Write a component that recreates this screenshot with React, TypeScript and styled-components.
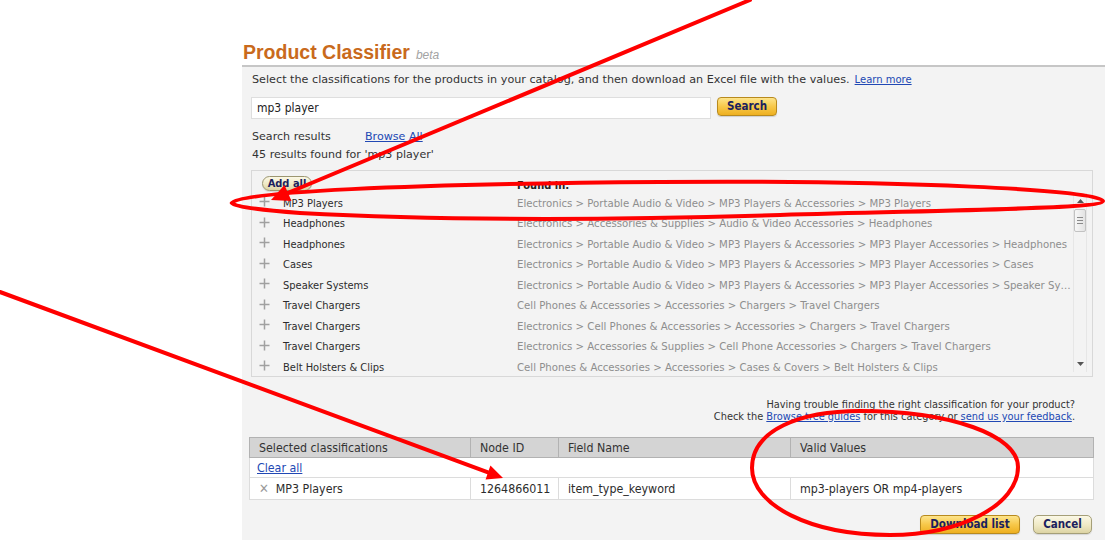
import React from "react";
import styled, { createGlobalStyle } from "styled-components";

const GlobalStyle = createGlobalStyle`
  html, body { margin: 0; padding: 0; background: #ffffff; }
  body {
    font-family: "DejaVu Sans Condensed", "DejaVu Sans", sans-serif;
    font-size: 11px;
    color: #333333;
  }
`;

const Page = styled.div`
  position: relative;
  width: 1105px;
  height: 540px;
  overflow: hidden;
  padding-left: 242px;
  box-sizing: border-box;
  display: flex;
  flex-direction: column;
`;

const Title = styled.h1`
  margin: 40px 0 0 1px;
  height: 24px;
  line-height: 24px;
  font-family: "Liberation Sans", Arial, sans-serif;
  font-size: 19.5px;
  font-weight: bold;
  color: #c96a1c;
  display: flex;
  align-items: baseline;
  gap: 6px;
`;

const Beta = styled.span`
  font-size: 12px;
  font-style: italic;
  font-weight: normal;
  color: #a3a3a3;
`;

const Panel = styled.div`
  margin-top: 1px;
  flex: 1;
  background: #f3f3f3;
  border-top: 2px solid #c6c6c6;
  padding: 6px 12px 0 9px;
  display: flex;
  flex-direction: column;
`;

const Intro = styled.div`
  font-family: "DejaVu Sans", sans-serif;
  font-size: 11.2px;
  line-height: 14px;
  padding-left: 1px;
  color: #333;
`;

const SmallLink = styled.a`
  font-size: 10px;
  color: #2148b4;
  text-decoration: underline;
  margin-left: 5px;
`;

const Link = styled.a`
  color: #2148b4;
  text-decoration: underline;
  cursor: pointer;
`;

const SearchRow = styled.div`
  margin-top: 10px;
  display: flex;
  align-items: flex-start;
  gap: 6px;
`;

const SearchInput = styled.div`
  width: 460px;
  height: 22px;
  box-sizing: border-box;
  background: #ffffff;
  border: 1px solid #dedede;
  padding-left: 5px;
  font-size: 12px;
  line-height: 20px;
  color: #222;
`;

const GoldButton = styled.button<{ $w: number }>`
  width: ${(p) => p.$w}px;
  height: 19px;
  box-sizing: border-box;
  padding: 0;
  border: 1px solid #b88a1e;
  border-radius: 4px;
  background: linear-gradient(#fde48a 0%, #f7c84a 50%, #eeb020 100%);
  font-family: "DejaVu Sans Condensed", "DejaVu Sans", sans-serif;
  font-size: 11.5px;
  font-weight: bold;
  color: #1b1f5e;
  line-height: 17px;
  box-shadow: 0 1px 1px rgba(0,0,0,0.15);
`;

const CreamButton = styled.button<{ $w: number; $h: number }>`
  width: ${(p) => p.$w}px;
  height: ${(p) => p.$h}px;
  box-sizing: border-box;
  padding: 0;
  border: 1px solid #a59f78;
  border-radius: 5px;
  background: linear-gradient(#fbf8e6 0%, #efe9c4 55%, #ddd4a4 100%);
  font-family: "DejaVu Sans Condensed", "DejaVu Sans", sans-serif;
  font-size: 11.5px;
  font-weight: bold;
  color: #1b1f5e;
  line-height: 100%;
  box-shadow: 0 1px 1px rgba(0,0,0,0.12);
`;

const Info = styled.div`
  margin-top: 9px;
  font-family: "DejaVu Sans", sans-serif;
  font-size: 11.1px;
  line-height: 18px;
  padding-left: 1px;
`;

const InfoLabel = styled.span`
  display: inline-block;
  width: 113px;
`;

const ResultsBox = styled.div`
  margin-top: 6px;
  height: 207px;
  box-sizing: border-box;
  border: 1px solid #d8d8d8;
  display: flex;
  overflow: hidden;
`;

const List = styled.div`
  flex: 1;
  min-width: 0;
`;

const ListGrid = styled.div`
  display: grid;
  grid-template-columns: 31px 234px minmax(0, 1fr);
  align-items: center;
`;

const HeaderRow = styled(ListGrid)`
  height: 22px;
  align-items: start;
`;

const AddAll = styled(CreamButton)`
  grid-column: 1 / span 2;
  margin: 5px 0 0 10px;
  border-radius: 8px;
  font-size: 11px;
  border-color: #9c9670;
`;

const FoundIn = styled.div`
  grid-column: 3;
  align-self: end;
  font-weight: bold;
  color: #222;
  line-height: 14px;
`;

const Row = styled(ListGrid)`
  height: 20.5px;
`;

const PlusIcon = styled.svg`
  margin: 0 0 3px 7px;
  display: block;
`;

const Name = styled.div`
  color: #2c2c2c;
  white-space: nowrap;
`;

const Path = styled.div`
  color: #8e8e8e;
  font-size: 11.3px;
  white-space: nowrap;
  overflow: hidden;
  text-overflow: ellipsis;
`;

const ScrollTrack = styled.div`
  width: 14px;
  margin: 22px 5px 4px 0;
  box-sizing: border-box;
  border-left: 1px solid #e6e6e6;
  border-right: 1px solid #e6e6e6;
  display: flex;
  flex-direction: column;
  align-items: center;
`;

const ScrollArrow = styled.div`
  height: 16px;
  width: 100%;
  display: flex;
  align-items: center;
  justify-content: center;
`;

const Thumb = styled.div`
  width: 12px;
  height: 23px;
  box-sizing: border-box;
  border: 1px solid #c2c2c2;
  border-radius: 2px;
  background: linear-gradient(90deg, #f7f7f7, #e3e3e3);
  display: flex;
  flex-direction: column;
  justify-content: center;
  align-items: center;
  gap: 2px;
`;

const Grip = styled.div`
  width: 6px;
  height: 1px;
  background: #8a8a8a;
`;

const Spacer = styled.div`
  flex: 1;
`;

const Help = styled.div`
  margin-top: 22px;
  padding-right: 18px;
  text-align: right;
  font-size: 10.9px;
  line-height: 12px;
  color: #333;
`;

const Table = styled.table`
  margin: 14px 0 0 -2px;
  width: 844px;
  border-collapse: collapse;
  table-layout: fixed;
  font-size: 12.3px;
  color: #2c2c2c;
`;

const Th = styled.th<{ $w: number }>`
  width: ${(p) => p.$w}px;
  height: 20px;
  padding: 0 0 0 9px;
  box-sizing: border-box;
  text-align: left;
  font-weight: normal;
  background: #d4d4d4;
  border: 1px solid #b2b2b2;
  color: #333;
`;

const ClearCell = styled.td`
  height: 19px;
  padding: 0 0 0 7px;
  background: #fff;
  border: 1px solid #dcdcdc;
  border-top: none;
`;

const Td = styled.td`
  height: 21px;
  padding: 0 0 0 9px;
  background: #fff;
  border: 1px solid #dcdcdc;
  white-space: nowrap;
`;

const XMark = styled.span`
  color: #9a9a9a;
  font-size: 13px;
  margin-right: 7px;
`;

const Actions = styled.div`
  margin-top: 15px;
  padding-right: 1px;
  display: flex;
  justify-content: flex-end;
  gap: 13px;
`;

const Overlay = styled.svg`
  position: absolute;
  left: 0;
  top: 0;
  pointer-events: none;
  z-index: 10;
`;

const results: [string, string][] = [
  ["MP3 Players", "Electronics > Portable Audio & Video > MP3 Players & Accessories > MP3 Players"],
  ["Headphones", "Electronics > Accessories & Supplies > Audio & Video Accessories > Headphones"],
  ["Headphones", "Electronics > Portable Audio & Video > MP3 Players & Accessories > MP3 Player Accessories > Headphones"],
  ["Cases", "Electronics > Portable Audio & Video > MP3 Players & Accessories > MP3 Player Accessories > Cases"],
  ["Speaker Systems", "Electronics > Portable Audio & Video > MP3 Players & Accessories > MP3 Player Accessories > Speaker Systems"],
  ["Travel Chargers", "Cell Phones & Accessories > Accessories > Chargers > Travel Chargers"],
  ["Travel Chargers", "Electronics > Cell Phones & Accessories > Accessories > Chargers > Travel Chargers"],
  ["Travel Chargers", "Electronics > Accessories & Supplies > Cell Phone Accessories > Chargers > Travel Chargers"],
  ["Belt Holsters & Clips", "Cell Phones & Accessories > Accessories > Cases & Covers > Belt Holsters & Clips"],
];

const Plus = () => (
  <PlusIcon width="11" height="11" viewBox="0 0 11 11">
    <path d="M5.5 0.5V10.5M0.5 5.5H10.5" stroke="#a0a0a0" strokeWidth="1.5" />
  </PlusIcon>
);

const Annotations = () => (
  <Overlay width="1105" height="540" viewBox="0 0 1105 540">
    <g stroke="#ff0000" strokeWidth="4" fill="none" strokeLinecap="round">
      <path d="M750 0 L287.6 193" />
      <path d="M232 203 C240 192, 400 184, 660 182 C900 180, 1103 190, 1103 201 C1103 209, 950 210, 780 215 C620 220, 450 221, 300 213 C260 210, 235 207, 232 203 Z" />
      <path d="M0 292 L488 472.4" />
      <path d="M752 468 C752 430, 800 411, 860 411 C950 411, 1018 435, 1018 467 C1018 505, 960 535, 890 535 C810 535, 752 505, 752 468 Z" />
    </g>
    <g fill="#ff0000">
      <polygon points="271,200 291.5,201 284.5,185" />
      <polygon points="503,478 485.6,479.5 490.4,465.4" />
    </g>
  </Overlay>
);

export default function App() {
  return (
    <>
      <GlobalStyle />
      <Page>
        <Title>
          Product Classifier <Beta>beta</Beta>
        </Title>
        <Panel>
          <Intro>
            Select the classifications for the products in your catalog, and then download an Excel file with the values.
            <SmallLink>Learn more</SmallLink>
          </Intro>
          <SearchRow>
            <SearchInput>mp3 player</SearchInput>
            <GoldButton $w={60}>Search</GoldButton>
          </SearchRow>
          <Info>
            <div>
              <InfoLabel>Search results</InfoLabel>
              <Link>Browse All</Link>
            </div>
            <div>45 results found for 'mp3 player'</div>
          </Info>
          <ResultsBox>
            <List>
              <HeaderRow>
                <AddAll $w={50} $h={15}>Add all</AddAll>
                <FoundIn>Found in:</FoundIn>
              </HeaderRow>
              {results.map(([name, path], i) => (
                <Row key={i}>
                  <Plus />
                  <Name>{name}</Name>
                  <Path>{path}</Path>
                </Row>
              ))}
            </List>
            <ScrollTrack>
              <ScrollArrow>
                <svg width="7" height="4" viewBox="0 0 7 4"><polygon points="3.5,0 7,4 0,4" fill="#555" /></svg>
              </ScrollArrow>
              <Thumb>
                <Grip />
                <Grip />
                <Grip />
              </Thumb>
              <Spacer />
              <ScrollArrow>
                <svg width="7" height="4" viewBox="0 0 7 4"><polygon points="0,0 7,0 3.5,4" fill="#555" /></svg>
              </ScrollArrow>
            </ScrollTrack>
          </ResultsBox>
          <Help>
            <div>Having trouble finding the right classification for your product?</div>
            <div>
              Check the <Link>Browse tree guides</Link> for this category or <Link>send us your feedback</Link>.
            </div>
          </Help>
          <Table>
            <thead>
              <tr>
                <Th $w={221}>Selected classifications</Th>
                <Th $w={88}>Node ID</Th>
                <Th $w={232}>Field Name</Th>
                <Th $w={303}>Valid Values</Th>
              </tr>
            </thead>
            <tbody>
              <tr>
                <ClearCell colSpan={4}>
                  <Link>Clear all</Link>
                </ClearCell>
              </tr>
              <tr>
                <Td>
                  <XMark>✕</XMark>MP3 Players
                </Td>
                <Td>1264866011</Td>
                <Td>item_type_keyword</Td>
                <Td>mp3-players OR mp4-players</Td>
              </tr>
            </tbody>
          </Table>
          <Actions>
            <GoldButton $w={100}>Download list</GoldButton>
            <CreamButton $w={59} $h={19}>Cancel</CreamButton>
          </Actions>
        </Panel>
        <Annotations />
      </Page>
    </>
  );
}
